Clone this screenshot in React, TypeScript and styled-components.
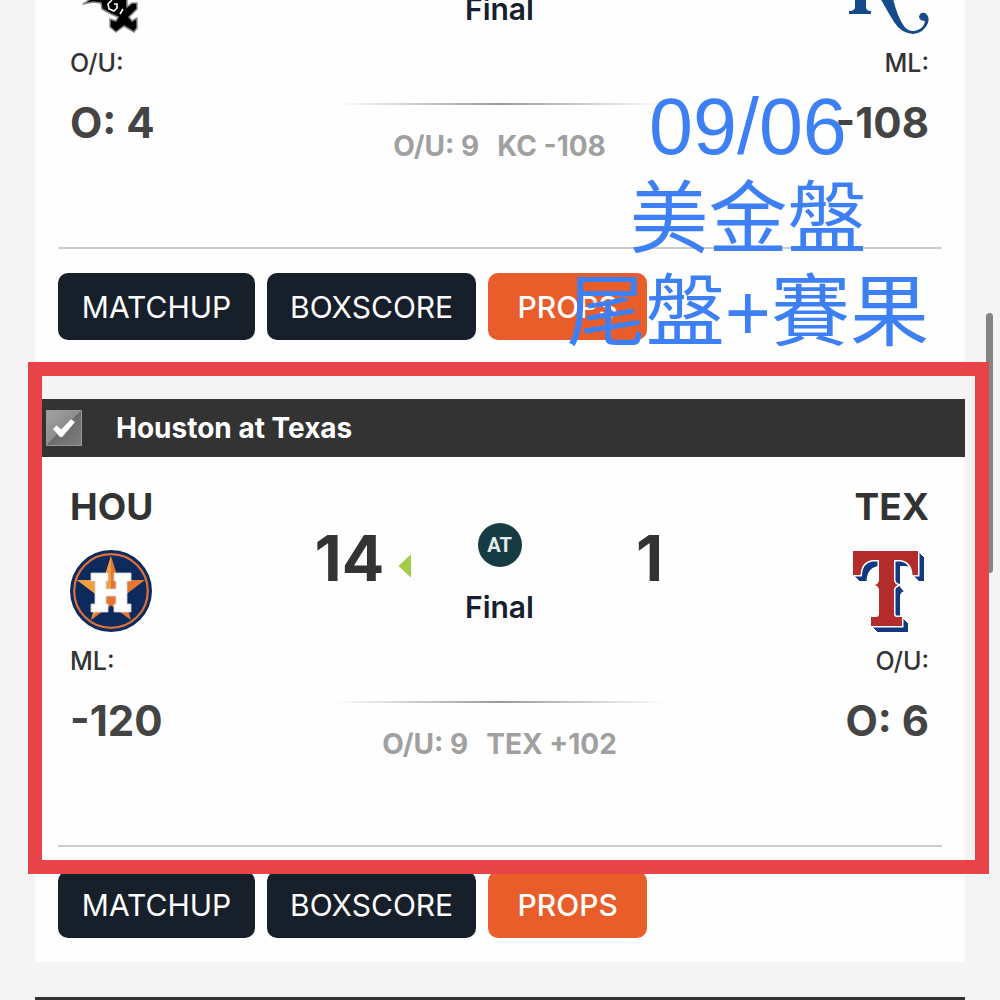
import React, { ReactNode } from "react";
import styled, { createGlobalStyle } from "styled-components";

const GlobalStyle = createGlobalStyle`
  * { box-sizing: border-box; }
  body {
    margin: 0;
    background: #f4f4f4;
    font-family: Inter, "Liberation Sans", sans-serif;
    color: #333;
  }
`;

const Page = styled.main`
  position: relative;
  height: 100vh;
  overflow: hidden;
  display: flex;
  flex-direction: column;
  gap: 35px;
  padding: 0 35px;
`;

const Card = styled.article<{ $scrolled?: boolean }>`
  position: relative;
  flex: none;
  display: flex;
  flex-direction: column;
  justify-content: flex-end;
  height: ${(p) => (p.$scrolled ? "364px" : "auto")};
  background: #fefefe;
`;

const Header = styled.header`
  display: flex;
  align-items: center;
  height: 58px;
  flex: none;
  padding: 0 11px;
  background: #333;
  color: #fff;
`;

const PickLabel = styled.label`
  display: flex;
  align-items: center;
  gap: 34px;
  font-size: 28px;
  line-height: 36px;
  font-weight: 700;
`;

const Pick = styled.input`
  appearance: none;
  width: 36px;
  height: 36px;
  margin: 0;
  border: 1px solid #999;
  background: linear-gradient(135deg, #a3a3a3, #8c8c8c 50%, #6c6c6c 50%, #7e7e7e);
  display: grid;
  place-items: center;
  &:checked::before {
    content: "";
    width: 22px;
    height: 18px;
    background: #fff;
    clip-path: polygon(0 55%, 16% 36%, 37% 58%, 82% 2%, 100% 16%, 42% 100%, 32% 100%);
  }
`;

const Matchup = styled.div`
  flex: none;
  display: grid;
  grid-template-columns: 1fr 450px 1fr;
  height: 388px;
  padding: 30px 36px 0 35px;
`;

const Team = styled.section<{ $right?: boolean }>`
  display: flex;
  flex-direction: column;
  align-items: ${(p) => (p.$right ? "flex-end" : "flex-start")};
`;

const Code = styled.h2`
  margin: 0 0 23px;
  height: 40px;
  font-size: 37px;
  line-height: 40px;
  font-weight: 700;
`;

const Logo = styled.div`
  width: 82px;
  height: 82px;
  margin-bottom: 13px;
  svg { display: block; }
`;

const OddsLabel = styled.div`
  margin-bottom: 20px;
  font-size: 25px;
  line-height: 32px;
  font-weight: 500;
`;

const OddsValue = styled.div`
  font-size: 42px;
  line-height: 48px;
  font-weight: 700;
  color: #444;
`;

const Middle = styled.section`
  display: flex;
  flex-direction: column;
  align-items: center;
  padding-top: 36px;
`;

const Scoreboard = styled.div`
  width: 100%;
  display: grid;
  grid-template-columns: 1fr 1fr 1fr;
  align-items: start;
  margin-bottom: 76px;
`;

const Score = styled.div`
  display: grid;
  grid-template-columns: 1fr auto 1fr;
  column-gap: 14px;
  font-size: 63px;
  line-height: 70px;
  font-weight: 700;
  & > span { grid-column: 2; }
`;

const Winner = styled.i`
  align-self: center;
  margin-top: 16px;
  width: 13px;
  height: 24px;
  background: #a3cb47;
  clip-path: polygon(0 50%, 100% 0, 100% 100%);
`;

const Status = styled.div`
  display: flex;
  flex-direction: column;
  align-items: center;
  gap: 22px;
  font-size: 30px;
  line-height: 36px;
  font-weight: 600;
  color: #171f2e;
`;

const AtBadge = styled.span`
  width: 44px;
  height: 44px;
  border-radius: 50%;
  background: #173b42;
  color: #e4ebeb;
  font-family: Roboto, sans-serif;
  font-size: 20px;
  line-height: 44px;
  font-weight: 700;
  text-align: center;
`;

const Divider = styled.div`
  width: 330px;
  height: 2px;
  margin-bottom: 23px;
  background: linear-gradient(90deg, transparent, #999 50%, transparent);
`;

const Lines = styled.div`
  display: flex;
  gap: 18px;
  font-size: 28px;
  line-height: 36px;
  font-weight: 700;
  color: #a0a0a0;
`;

const Actions = styled.footer`
  flex: none;
  display: flex;
  gap: 12px;
  margin: 0 23px;
  padding: 24px 0;
  border-top: 2px solid #ccc;
`;

const Action = styled.button<{ $accent?: boolean }>`
  height: 67px;
  min-width: ${(p) => (p.$accent ? 159 : 197)}px;
  padding: 0 23px;
  border: 0;
  border-radius: 10px;
  background: ${(p) => (p.$accent ? "#e85d29" : "#171f2a")};
  color: #fff;
  font-family: inherit;
  font-size: 30px;
  line-height: 36px;
  font-weight: ${(p) => (p.$accent ? 500 : 400)};
`;

const Highlight = styled.div`
  position: absolute;
  z-index: 2;
  top: -37px;
  right: -24px;
  bottom: 88px;
  left: -7px;
  border: 14px solid #e84349;
  pointer-events: none;
`;

const Note = styled.div`
  position: absolute;
  z-index: 1;
  top: 80px;
  right: 71px;
  font-family: "Liberation Sans", "Noto Sans CJK TC", sans-serif;
  font-size: 79px;
  line-height: 93px;
  font-weight: 400;
  text-align: center;
  color: #3d7ff5;
  pointer-events: none;
`;

const ScrollThumb = styled.div`
  position: absolute;
  top: 313px;
  right: 7px;
  width: 7px;
  height: 260px;
  border-radius: 4px;
  background: #858585;
`;

const SoxLogo = () => (
  <svg width="82" height="82" viewBox="0 0 82 82" role="img" aria-label="White Sox">
    <path
      d="M13 52 L22 46 H57 V55 L62 51 H67 V57 L59 65 L62 69 L67 66 V76 L64 80 L54 74 L46 80 L40 75 V67 L46 69 L48 65 L41 62 L32 57 L31 51 L23 50 Z"
      fill="#000"
      stroke="#888"
      strokeWidth="1.5"
      strokeLinejoin="round"
    />
    <path d="M42 48 L38 52 L39 57 L44 59 L47 56 V52 H44 M53 57 L50 62" stroke="#fff" strokeWidth="1.6" fill="none" />
  </svg>
);

const RoyalsLogo = () => (
  <svg width="82" height="82" viewBox="0 0 82 82" role="img" aria-label="Royals">
    <g fill="#174a8b">
      <path d="M8 40 H19 V55 Q19 59 24 59 V62 H2 V59 Q8 59 8 55 Z" />
      <path d="M31 42 H45 Q49 61 55 71 Q60 80 67 79 Q77 77 78 69 Q73 69 72 65 Q73 60 78 61 Q83 64 81 71 Q77 81 66 82 Q54 81 47 70 Q39 57 31 42 Z" />
    </g>
  </svg>
);

const AstrosLogo = () => (
  <svg width="82" height="82" viewBox="0 0 82 82" role="img" aria-label="Astros">
    <circle cx="41" cy="41" r="41" fill="#0c2b5c" />
    <circle cx="41" cy="41" r="36.8" fill="none" stroke="#dc713b" strokeWidth="2.2" />
    <path d="M41 6 L48.5 30 H75 L54 46 L61 70 L41 55.5 L21 70 L28 46 L7 30 H33.5 Z" fill="#e57632" />
    <path d="M41 6 V41 L33.5 30 Z M7 30 H33.5 L41 41 L28 46 Z M21 70 L28 46 L41 41 Z" fill="#eda03c" />
    <path
      d="M21 23 H38 V31 H36 V39 H46 V31 H44 V23 H61 V31 H57 V54 H61 V62 H44 V54 H46 V46 H36 V54 H38 V62 H21 V54 H25 V31 H21 Z"
      fill="#fff"
      stroke="#d5d8de"
      strokeWidth="0.8"
    />
  </svg>
);

const T_PATH =
  "M6 1 H71 V25 H65.5 Q65 12 54 10 H47 V31 Q48 34 51 35 Q48 36 47 39 V64 Q47 67 50 67 H55 V76 H24 V67 H29 Q32 67 32 64 V39 Q31 36 28 35 Q31 34 32 31 V10 H25 Q14 12 13.5 25 H6 Z";

const RangersLogo = () => (
  <svg width="82" height="82" viewBox="0 0 82 82" role="img" aria-label="Rangers">
    <g fill="#12397f">
      {[2, 3, 4, 5, 6].map((n) => (
        <path key={n} d={T_PATH} transform={`translate(${n} ${n})`} />
      ))}
    </g>
    <path d={T_PATH} fill="#b32b2b" stroke="#fff" strokeWidth="3" paintOrder="stroke" />
  </svg>
);

type Side = { code?: string; logo: ReactNode; label: string; value: string; score?: string; won?: boolean };

const TeamBlock = ({ side, right }: { side: Side; right?: boolean }) => (
  <Team $right={right}>
    <Code>{side.code}</Code>
    <Logo>{side.logo}</Logo>
    <OddsLabel>{side.label}</OddsLabel>
    <OddsValue>{side.value}</OddsValue>
  </Team>
);

const Game = ({ away, home, total, line }: { away: Side; home: Side; total: string; line: string }) => (
  <>
    <Matchup>
      <TeamBlock side={away} />
      <Middle>
        <Scoreboard>
          <Score>
            <span>{away.score}</span>
            {away.won && <Winner />}
          </Score>
          <Status>
            <AtBadge>{away.score ? "AT" : ""}</AtBadge>
            <span>Final</span>
          </Status>
          <Score>
            <span>{home.score}</span>
          </Score>
        </Scoreboard>
        <Divider />
        <Lines>
          <span>{total}</span>
          <span>{line}</span>
        </Lines>
      </Middle>
      <TeamBlock side={home} right />
    </Matchup>
    <Actions>
      <Action type="button">MATCHUP</Action>
      <Action type="button">BOXSCORE</Action>
      <Action type="button" $accent>PROPS</Action>
    </Actions>
  </>
);

export default function App() {
  return (
    <>
      <GlobalStyle />
      <Page>
        <Card $scrolled>
          <Game
            away={{ logo: <SoxLogo />, label: "O/U:", value: "O: 4" }}
            home={{ logo: <RoyalsLogo />, label: "ML:", value: "-108" }}
            total="O/U: 9"
            line="KC -108"
          />
        </Card>
        <Card>
          <Header>
            <PickLabel>
              <Pick type="checkbox" defaultChecked />
              Houston at Texas
            </PickLabel>
          </Header>
          <Game
            away={{ code: "HOU", logo: <AstrosLogo />, label: "ML:", value: "-120", score: "14", won: true }}
            home={{ code: "TEX", logo: <RangersLogo />, label: "O/U:", value: "O: 6", score: "1" }}
            total="O/U: 9"
            line="TEX +102"
          />
          <Highlight />
        </Card>
        <Card>
          <Header />
        </Card>
        <Note>
          <div>09/06</div>
          <div>美金盤</div>
          <div>尾盤+賽果</div>
        </Note>
        <ScrollThumb />
      </Page>
    </>
  );
}
